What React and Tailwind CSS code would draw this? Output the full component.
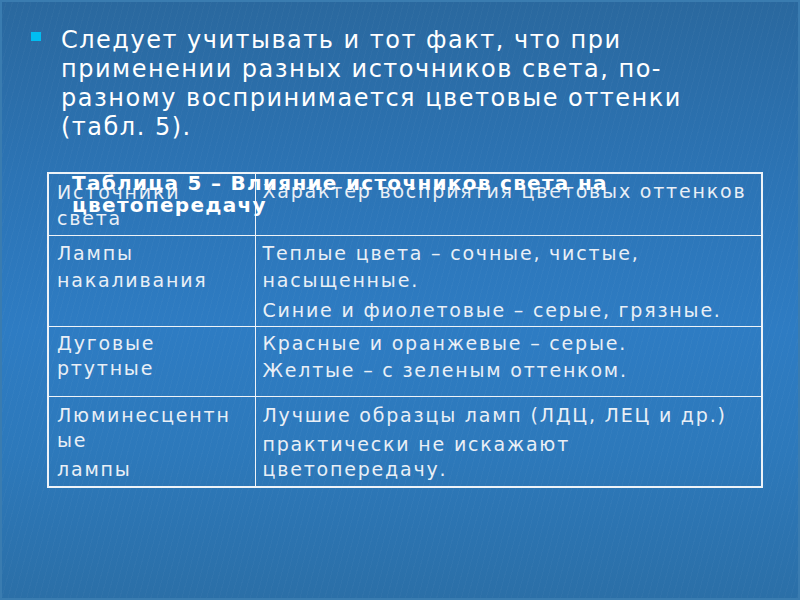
import React from "react";

const P = ({ children, first }) => (
  <p className={first ? "" : "mt-[4px]"}>{children}</p>
);

export default function App() {
  return (
    <div
      className="w-[800px] h-[600px] relative overflow-hidden bg-[linear-gradient(180deg,#2a689e_0%,#2c74b5_30%,#2e7cc3_55%,#2d79bb_75%,#2b6fa7_100%)]"
      style={{ fontFamily: "'DejaVu Sans', Verdana, sans-serif" }}
    >
      <div className="absolute inset-0 pointer-events-none bg-[repeating-linear-gradient(105deg,rgba(255,255,255,0.025)_0px,rgba(255,255,255,0.025)_1px,transparent_1px,transparent_6px)]" />
      <div className="absolute inset-0 pointer-events-none border-2 border-[#3a7cb0]" />
      <div className="relative flex flex-col">
        <div className="flex pt-[26px] pl-[31px]">
          <div className="w-[10px] h-[9px] bg-[#00bdf2] mt-[6px] shrink-0" />
          <div className="ml-[20px] text-[24px] leading-[29px] tracking-[1.5px] text-white whitespace-nowrap">
            Следует учитывать и тот факт, что при
            <br />
            применении разных источников света, по-
            <br />
            разному воспринимается цветовые оттенки
            <br />
            (табл. 5).
          </div>
        </div>
        <div className="relative ml-[47px] mt-[30px] w-[714px]">
          <table className="border-collapse border-2 border-[#eef3f8] text-[19px] leading-[25px] tracking-[1.8px] text-[#e9eff6] w-[714px] table-fixed">
            <colgroup>
              <col className="w-[207px]" />
              <col className="w-[507px]" />
            </colgroup>
            <tbody>
              <tr className="h-[62px]">
                <td className="border border-[#eef3f8] align-top px-[8px] pt-[5px] whitespace-nowrap">
                  <p className="leading-[26px]">
                    Источники
                    <br />
                    света
                  </p>
                </td>
                <td className="border border-[#eef3f8] align-top px-[7px] pt-[5px] whitespace-nowrap">
                  Характер восприятия цветовых оттенков
                </td>
              </tr>
              <tr className="h-[91px]">
                <td className="border border-[#eef3f8] align-top px-[8px] pt-[4px] whitespace-nowrap">
                  <p className="leading-[27px]">
                    Лампы
                    <br />
                    накаливания
                  </p>
                </td>
                <td className="border border-[#eef3f8] align-top px-[7px] pt-[4px] whitespace-nowrap">
                  <p className="leading-[27px]">
                    Теплые цвета – сочные, чистые,
                    <br />
                    насыщенные.
                  </p>
                  <P>Синие и фиолетовые – серые, грязные.</P>
                </td>
              </tr>
              <tr className="h-[70px]">
                <td className="border border-[#eef3f8] align-top px-[8px] pt-[4px] whitespace-nowrap">
                  <p>
                    Дуговые
                    <br />
                    ртутные
                  </p>
                </td>
                <td className="border border-[#eef3f8] align-top px-[7px] pt-[4px] whitespace-nowrap">
                  <p>Красные и оранжевые – серые.</p>
                  <p className="mt-[2px]">Желтые – с зеленым оттенком.</p>
                </td>
              </tr>
              <tr className="h-[91px]">
                <td className="border border-[#eef3f8] align-top px-[8px] pt-[6px] whitespace-nowrap">
                  <p>
                    Люминесцентн
                    <br />
                    ые
                  </p>
                  <P>лампы</P>
                </td>
                <td className="border border-[#eef3f8] align-top px-[7px] pt-[6px] whitespace-nowrap">
                  <p>Лучшие образцы ламп (ЛДЦ, ЛЕЦ и др.)</p>
                  <p className="mt-[4px]">
                    практически не искажают
                    <br />
                    цветопередачу.
                  </p>
                </td>
              </tr>
            </tbody>
          </table>
          <div className="absolute left-[25px] top-[0px] text-[20px] leading-[22px] font-bold tracking-[1.3px] text-white whitespace-nowrap">
            Таблица 5 – Влияние источников света на
            <br />
            цветопередачу
          </div>
        </div>
      </div>
    </div>
  );
}
